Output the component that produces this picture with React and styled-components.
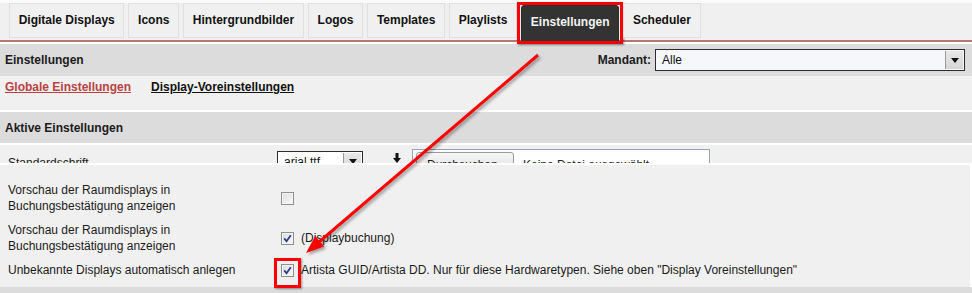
import React from 'react';
import styled, { createGlobalStyle } from 'styled-components';

const GlobalStyle = createGlobalStyle`
  html, body {
    margin: 0;
    padding: 0;
    background: #fff;
  }
  body {
    width: 972px;
    height: 293px;
    overflow: hidden;
    font-family: "Liberation Sans", Arial, sans-serif;
    font-size: 12px;
    color: #1b1b1b;
  }
`;

const Page = styled.div`
  position: relative;
  width: 972px;
  height: 293px;
  background: #fff;
`;

const TabBar = styled.nav`
  display: flex;
  align-items: flex-start;
  gap: 4px;
  height: 37px;
  padding: 3px 0 0 9px;
  border-bottom: 2px solid #b97474;
  margin-bottom: 2px;
  background: #f0f0f0;
  box-sizing: content-box;
  box-shadow: inset 0 3px 0 #fbfbfb;
`;

const Tab = styled.div`
  position: relative;
  height: ${(p) => (p.active ? '35px' : '33px')};
  line-height: 33px;
  padding: 0 8.7px;
  margin-top: ${(p) => (p.active ? '2px' : '0')};
  border: 1px solid ${(p) => (p.active ? '#2e2e2e' : '#e0e0e0')};
  border-radius: ${(p) => (p.active ? '3px 3px 0 0' : '0')};
  background: ${(p) => (p.active ? '#333' : '#f0f0f0')};
  color: ${(p) => (p.active ? '#f4f4f4' : '#111')};
  font-weight: bold;
  font-size: 12px;
  white-space: nowrap;

  ${(p) =>
    p.highlight &&
    `
    &::after {
      content: '';
      position: absolute;
      left: -5px;
      right: -5px;
      top: -4px;
      bottom: -3px;
      border: 3px solid #f00;
      box-shadow: 1px 1px 2px rgba(0,0,0,0.45);
    }
  `}
`;

const SectionBar = styled.div`
  display: flex;
  align-items: center;
  justify-content: space-between;
  height: ${(p) => p.h || 32}px;
  padding: 0 7px 0 5px;
  background: #dcdcdc;
  font-weight: bold;
`;

const Mandant = styled.label`
  display: flex;
  align-items: center;
  gap: 4px;
  font-weight: bold;
`;

const Select = styled.div`
  position: relative;
  display: flex;
  align-items: center;
  width: ${(p) => p.w}px;
  height: ${(p) => p.h || 21}px;
  box-sizing: border-box;
  padding-left: 6px;
  border: 1px solid #2c2c2c;
  background: ${(p) => p.bg || '#f5f7fa'};
  font-weight: normal;
  color: #111;
`;

const SelectButton = styled.span`
  position: absolute;
  top: 1px;
  right: 1px;
  bottom: 1px;
  width: 17px;
  display: flex;
  align-items: center;
  justify-content: center;
  background: linear-gradient(#e8e8e8, #d6d6d6);
  border-left: 1px solid #9a9a9a;

  &::before {
    content: '';
    border-left: 4px solid transparent;
    border-right: 4px solid transparent;
    border-top: 5px solid #111;
  }
`;

const LinkRow = styled.div`
  display: flex;
  gap: 20px;
  height: 31px;
  padding: 3px 5px 0;
  background: #f0f0f0;
  border-bottom: 2px solid #fff;
`;

const NavLink = styled.a`
  font-weight: bold;
  line-height: 16px;
  text-decoration: underline;
  color: ${(p) => (p.current ? '#b94242' : '#111')};
`;

const ClippedRow = styled.div`
  display: flex;
  align-items: flex-start;
  height: 18px;
  overflow: hidden;
  margin-top: 2px;
  padding-left: 8px;
  background: #f0f0f0;
`;

const FieldLabel = styled.span`
  width: 269px;
  padding-top: 10px;
  line-height: 16px;
`;

const FontSelect = styled(Select)`
  margin-top: 6px;
  background: #fff;
`;

const DownloadIcon = styled.svg`
  margin: 8px 11px 0 30px;
`;

const FileBox = styled.div`
  display: flex;
  align-items: flex-start;
  gap: 9px;
  width: 298px;
  height: 24px;
  margin-top: 4px;
  padding: 2px 3px;
  box-sizing: border-box;
  border: 1px solid #9aa3b5;
  background: #fff;
`;

const FileButton = styled.span`
  width: 98px;
  height: 22px;
  box-sizing: border-box;
  padding: 5px 0 0 10px;
  border: 1px solid #9a9a9a;
  border-radius: 3px;
  background: linear-gradient(#f6f6f6, #dedede);
`;

const FileText = styled.span`
  padding-top: 6px;
`;

const LowerPanel = styled.div`
  margin-top: 2px;
  height: 109px;
  padding-top: 13px;
  background: #f0f0f0;
  border-right: 2px solid #fff;
`;

const SettingRow = styled.div`
  display: grid;
  grid-template-columns: 273px 1fr;
  align-items: center;
  padding: 4px 0 4px 8px;
  line-height: 16px;
`;

const Control = styled.div`
  display: flex;
  align-items: center;
  gap: 7px;
`;

const Box = styled.span`
  position: relative;
  width: 13px;
  height: 13px;
  box-sizing: border-box;
  border: 1px solid #8e8f8f;
  background: linear-gradient(135deg, #dcdcdc, #fbfbfb);
  box-shadow: inset 0 0 0 1px #f4f4f4;
  display: flex;
  align-items: center;
  justify-content: center;

  ${(p) =>
    p.highlight &&
    `
    &::after {
      content: '';
      position: absolute;
      left: -8px;
      right: -8px;
      top: -7px;
      bottom: -12px;
      border: 3px solid #f00;
      box-shadow: 1px 1px 2px rgba(0,0,0,0.4);
    }
  `}
`;

const BottomStrip = styled.div`
  height: 6px;
  background: #dcdcdc;
`;

const Annotations = styled.svg`
  position: absolute;
  inset: 0;
  pointer-events: none;
  filter: drop-shadow(2px 2px 1.5px rgba(0, 0, 0, 0.35));
`;

function Checkbox({ checked, highlight }) {
  return (
    <Box highlight={highlight}>
      {checked && (
        <svg width="9" height="9" viewBox="0 0 9 9">
          <path d="M1.2 4.4 L3.5 7.2 L7.8 1.2" fill="none" stroke="#2f3f86" strokeWidth="1.8" />
        </svg>
      )}
    </Box>
  );
}

const tabs = ['Digitale Displays', 'Icons', 'Hintergrundbilder', 'Logos', 'Templates', 'Playlists', 'Einstellungen', 'Scheduler'];

export default function App() {
  return (
    <Page>
      <GlobalStyle />
      <TabBar>
        {tabs.map((t) => (
          <Tab key={t} active={t === 'Einstellungen'} highlight={t === 'Einstellungen'}>
            {t}
          </Tab>
        ))}
      </TabBar>

      <SectionBar>
        <span>Einstellungen</span>
        <Mandant>
          Mandant:
          <Select w={310} h={22}>
            Alle
            <SelectButton />
          </Select>
        </Mandant>
      </SectionBar>

      <LinkRow>
        <NavLink current>Globale Einstellungen</NavLink>
        <NavLink>Display-Voreinstellungen</NavLink>
      </LinkRow>

      <SectionBar h={31}>
        <span>Aktive Einstellungen</span>
      </SectionBar>

      <ClippedRow>
        <FieldLabel>Standardschrift</FieldLabel>
        <FontSelect w={86} h={21}>
          arial.ttf
          <SelectButton />
        </FontSelect>
        <DownloadIcon width="8" height="10" viewBox="0 0 8 10">
          <rect x="2.5" y="0" width="3" height="5" fill="#111" />
          <path d="M0 5 H8 L4 10 Z" fill="#111" />
        </DownloadIcon>
        <FileBox>
          <FileButton>Durchsuchen...</FileButton>
          <FileText>Keine Datei ausgewählt.</FileText>
        </FileBox>
      </ClippedRow>

      <LowerPanel>
        <SettingRow>
          <span>
            Vorschau der Raumdisplays in
            <br />
            Buchungsbestätigung anzeigen
          </span>
          <Control>
            <Checkbox />
          </Control>
        </SettingRow>
        <SettingRow>
          <span>
            Vorschau der Raumdisplays in
            <br />
            Buchungsbestätigung anzeigen
          </span>
          <Control>
            <Checkbox checked />
            <span>(Displaybuchung)</span>
          </Control>
        </SettingRow>
        <SettingRow>
          <span>Unbekannte Displays automatisch anlegen</span>
          <Control>
            <Checkbox checked highlight />
            <span>Artista GUID/Artista DD. Nur für diese Hardwaretypen. Siehe oben "Display Voreinstellungen"</span>
          </Control>
        </SettingRow>
      </LowerPanel>
      <BottomStrip />

      <Annotations width="972" height="293" viewBox="0 0 972 293">
        <line x1="538" y1="55" x2="319" y2="242" stroke="#f00" strokeWidth="3" />
        <path d="M306 253 L324.2 246.6 L315.2 236 Z" fill="#f00" />
      </Annotations>
    </Page>
  );
}
